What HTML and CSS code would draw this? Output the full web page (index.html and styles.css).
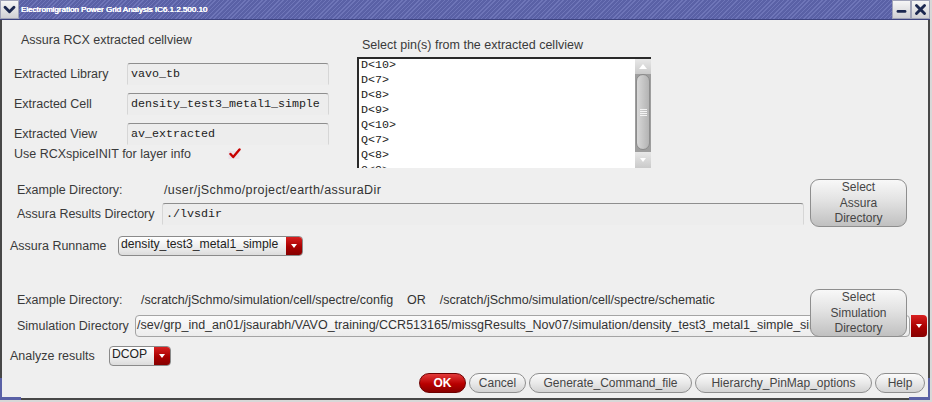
FILE: index.html
```html
<!DOCTYPE html>
<html>
<head>
<meta charset="utf-8">
<title>Electromigration Power Grid Analysis</title>
<link rel="stylesheet" href="styles.css">
</head>
<body>
<div class="window">
  <div class="titlebar">
    <div class="tb-btn">
      <svg width="19" height="19" viewBox="0 0 19 19"><polyline points="4.5,7 9.5,12 14.5,7" fill="none" stroke="#1c2850" stroke-width="3.2" stroke-linecap="round" stroke-linejoin="round"/></svg>
    </div>
    <div class="title">Electromigration Power Grid Analysis IC6.1.2.500.10</div>
    <div class="tb-btn">
      <svg width="19" height="19" viewBox="0 0 19 19"><rect x="4" y="10" width="11" height="3.2" rx="1.5" fill="#1c2850"/></svg>
    </div>
    <div class="tb-btn">
      <svg width="19" height="19" viewBox="0 0 19 19"><path d="M5 5 L14 14 M14 5 L5 14" stroke="#1c2850" stroke-width="3.2" stroke-linecap="round"/></svg>
    </div>
  </div>

  <div class="content">
    <div class="top">
      <div class="left-col">
        <div class="group-title">Assura RCX extracted cellview</div>
        <div class="fields">
          <div class="field"><span class="label lw-113">Extracted Library</span><div class="input mono w-202">vavo_tb</div></div>
          <div class="field"><span class="label lw-113">Extracted Cell</span><div class="input mono w-202">density_test3_metal1_simple</div></div>
          <div class="field last"><span class="label lw-113">Extracted View</span><div class="input mono w-202">av_extracted</div></div>
        </div>
        <div class="check-row">
          <span class="label lw-214">Use RCXspiceINIT for layer info</span>
          <svg class="check" width="13" height="11" viewBox="0 0 13 11"><rect x="0.5" y="3" width="11" height="8" fill="#e9e2e9"/><path d="M2.5 6 L5.2 9 L11.5 1.5" fill="none" stroke="#c80000" stroke-width="2.4" stroke-linecap="round" stroke-linejoin="round"/></svg>
        </div>
      </div>
      <div class="right-col">
        <div class="list-title">Select pin(s) from the extracted cellview</div>
        <div class="listbox">
          <div class="items mono">
            <div>D&lt;10&gt;</div>
            <div>D&lt;7&gt;</div>
            <div>D&lt;8&gt;</div>
            <div>D&lt;9&gt;</div>
            <div>Q&lt;10&gt;</div>
            <div>Q&lt;7&gt;</div>
            <div>Q&lt;8&gt;</div>
            <div>Q&lt;9&gt;</div>
          </div>
          <div class="scrollbar">
            <div class="sb-arrow up"><span class="tri-up"></span></div>
            <div class="sb-track">
              <div class="sb-thumb"><span class="grip"></span></div>
            </div>
            <div class="sb-arrow down"><span class="tri-down"></span></div>
          </div>
        </div>
      </div>
    </div>

    <div class="assura">
      <div class="rows">
        <div class="ex-row"><span class="label lw-147">Example Directory:</span><span class="path wide">/user/jSchmo/project/earth/assuraDir</span></div>
        <div class="field gap-6"><span class="label lw-145">Assura Results Directory</span><div class="input mono grow">./lvsdir</div></div>
      </div>
      <button class="btn select-btn">Select<br>Assura<br>Directory</button>
    </div>

    <div class="combo-row runname">
      <span class="label lw-108">Assura Runname</span>
      <div class="combo w-185"><span class="combo-text">density_test3_metal1_simple</span><span class="combo-arrow"><span class="tri-down"></span></span></div>
    </div>

    <div class="sim">
      <div class="ex-row"><span class="label lw-124">Example Directory:</span><span class="path pre">/scratch/jSchmo/simulation/cell/spectre/config    OR    /scratch/jSchmo/simulation/cell/spectre/schematic</span></div>
      <div class="field gap-8">
        <span class="label lw-118">Simulation Directory</span>
        <div class="sim-input">/sev/grp_ind_an01/jsaurabh/VAVO_training/CCR513165/missgResults_Nov07/simulation/density_test3_metal1_simple_sim</div>
        <span class="combo-arrow solo"><span class="tri-down"></span></span>
      </div>
      <button class="btn select-btn overlay">Select<br>Simulation<br>Directory</button>
    </div>

    <div class="combo-row analyze">
      <span class="label lw-99">Analyze results</span>
      <div class="combo w-62"><span class="combo-text">DCOP</span><span class="combo-arrow"><span class="tri-down"></span></span></div>
    </div>

    <div class="actions">
      <button class="btn ok w-47">OK</button>
      <button class="btn w-57">Cancel</button>
      <button class="btn w-163">Generate_Command_file</button>
      <button class="btn w-177">Hierarchy_PinMap_options</button>
      <button class="btn w-50">Help</button>
    </div>
  </div>
  <div class="corner left"></div>
  <div class="corner right"></div>
</div>
</body>
</html>
```

FILE: styles.css
```css
* { box-sizing: border-box; }
html, body { margin: 0; padding: 0; }
body {
  background: #d8d8d8;
  font-family: "Liberation Sans", Arial, sans-serif;
  font-size: 12.5px;
  color: #3a3a3a;
}
.window { position: relative; width: 930px; height: 400px; }

/* title bar */
.titlebar {
  height: 20px;
  display: flex;
  background: repeating-linear-gradient(135deg, #5a61a6 0 2px, #6e75b8 2px 3px);
  border-bottom: 1px solid #3d4380;
}
.tb-btn {
  width: 19px;
  height: 19px;
  background: linear-gradient(#f6f6f6, #d0d0d4);
  border: 1px solid #a0a3b8;
  display: flex;
  align-items: center;
  justify-content: center;
}
.tb-btn svg { display: block; }
.title {
  flex: 1;
  padding-left: 2px;
  color: #ffffff;
  font-size: 8px;
  line-height: 19px;
  text-shadow: 0 0 0.6px #ffffff, 0.3px 0 0 #ffffff;
  white-space: nowrap;
}

/* body */
.content {
  height: 380px;
  background: #efefef;
  border: 2px solid #474747;
  border-top: 0;
}
.label { display: inline-block; white-space: nowrap; color: #3a3a3a; }
.mono { font-family: "Liberation Mono", monospace; font-size: 11.67px; color: #222; }
.lw-99 { width: 99px; }
.lw-108 { width: 108px; }
.lw-113 { width: 113px; }
.lw-118 { width: 118px; }
.lw-124 { width: 124px; }
.lw-145 { width: 145px; }
.lw-147 { width: 147px; }
.lw-214 { width: 214px; }
.w-47 { width: 47px; }
.w-50 { width: 50px; }
.w-57 { width: 57px; }
.w-62 { width: 62px; }
.w-163 { width: 163px; }
.w-177 { width: 177px; }
.w-185 { width: 185px; }
.w-202 { width: 202px; }
.grow { flex: 1; }

.top { display: flex; height: 148px; }
.left-col { margin-left: 12px; width: 315px; }
.group-title { margin: 13px 0 0 7px; line-height: 14px; }
.fields { margin-top: 16px; }
.field { display: flex; align-items: center; height: 22px; margin-bottom: 8px; }
.field.last { margin-bottom: 2px; }
.input {
  height: 22px;
  border: 1px solid #d6d6d6;
  border-top-color: #8e8e8e;
  border-bottom-color: transparent;
  border-radius: 3px 3px 0 0;
  background: #ededed;
  padding-left: 3px;
  line-height: 20px;
  white-space: nowrap;
  overflow: hidden;
}
.check-row { display: flex; align-items: center; height: 14px; margin-left: 0; }
.check { display: block; margin-top: -1px; }

.right-col { margin-left: 28px; width: 294px; }
.list-title { margin-top: 18px; padding-left: 5px; line-height: 14px; }
.listbox {
  margin-top: 5px;
  height: 111px;
  display: flex;
  background: #ffffff;
  border-top: 2px solid #2a2a2a;
  border-left: 2px solid #2a2a2a;
  overflow: hidden;
}
.items { flex: 1; padding-left: 2px; line-height: 15px; margin-top: -1px; }
.scrollbar { width: 16px; display: flex; flex-direction: column; background: #cfcfcf; }
.sb-arrow {
  height: 15px;
  background: linear-gradient(#e8e8e8, #cacaca);
  display: flex;
  align-items: center;
  justify-content: center;
}
.sb-arrow.down { height: 16px; }
.tri-up { width: 0; height: 0; border-left: 4px solid transparent; border-right: 4px solid transparent; border-bottom: 5px solid #ffffff; }
.tri-down { width: 0; height: 0; border-left: 3.5px solid transparent; border-right: 3.5px solid transparent; border-top: 4.5px solid #ffffff; }
.sb-track { flex: 1; background: #9e9e9e; padding: 0 1px; }
.sb-thumb {
  height: 76px;
  border-radius: 7px;
  border: 1px solid #8c8c8c;
  background: linear-gradient(to right, #d8d8d8, #c2c2c2 60%, #b4b4b4);
  display: flex;
  align-items: center;
  justify-content: center;
}
.grip {
  width: 7px;
  height: 7px;
  background: repeating-linear-gradient(#f4f4f4 0 1px, transparent 1px 2px);
}

.assura { display: flex; align-items: flex-start; margin-top: 11px; padding-left: 15px; padding-right: 21px; }
.rows { flex: 1; padding-top: 4px; margin-right: 6px; }
.ex-row { display: flex; height: 14px; line-height: 14px; white-space: nowrap; }
.path { color: #333; }
.path.wide { letter-spacing: 0.4px; }
.pre { white-space: pre; }
.gap-6 { margin-top: 6px; margin-bottom: 0; }
.gap-8 { margin-top: 8px; margin-bottom: 0; }

.btn {
  font-family: "Liberation Sans", Arial, sans-serif;
  font-size: 12px;
  color: #454545;
  height: 20px;
  padding: 0;
  border: 1px solid #8e8e8e;
  border-radius: 10px;
  background: linear-gradient(#fbfbfb, #e9e9e9 50%, #d3d3d3);
  white-space: nowrap;
}
.select-btn {
  width: 97px;
  height: 48px;
  border-radius: 9px;
  line-height: 15.5px;
  background: linear-gradient(#f8f8f8, #e2e2e2 45%, #c0c0c0);
  flex: none;
}
.ok {
  background: linear-gradient(#e23a3a, #b80000 55%, #880000);
  border-color: #6e0000;
  color: #ffffff;
  font-weight: bold;
}

.combo-row { display: flex; align-items: center; padding-left: 8px; height: 20px; }
.runname { margin-top: 9px; }
.analyze { margin-top: 9px; }
.combo {
  display: flex;
  height: 20px;
  border: 1px solid #8a8a8a;
  border-radius: 4px;
  background: linear-gradient(#ffffff, #ececec 60%, #dcdcdc);
  overflow: hidden;
}
.combo-text { flex: 1; padding-left: 2px; line-height: 15px; font-size: 12.2px; color: #222; white-space: nowrap; overflow: hidden; }
.combo-arrow {
  width: 16px;
  background: linear-gradient(#d82020, #a80000 55%, #860000);
  display: flex;
  align-items: center;
  justify-content: center;
}
.combo-arrow.solo { height: 22px; width: 16px; margin-left: 1px; border-radius: 0 4px 4px 0; flex: none; }

.sim { position: relative; margin-top: 33px; padding: 4px 0 0 15px; }
.sim-input {
  width: 775px;
  height: 22px;
  border: 1px solid #a4a4a4;
  border-radius: 4px;
  background: linear-gradient(#fbfbfb, #ececec);
  padding-left: 1px;
  line-height: 19px;
  white-space: nowrap;
  overflow: hidden;
  color: #333;
}
.select-btn.overlay { position: absolute; top: 0; right: 21px; }

.actions { display: flex; justify-content: flex-end; gap: 3px; margin-top: 7px; padding-right: 3px; }

.corner { position: absolute; bottom: 0; width: 21px; height: 22px; border-bottom: 3px solid #5a61a6; }
.corner.left { left: 0; border-left: 2px solid #5a61a6; }
.corner.right { right: 0; border-right: 2px solid #5a61a6; }
```
